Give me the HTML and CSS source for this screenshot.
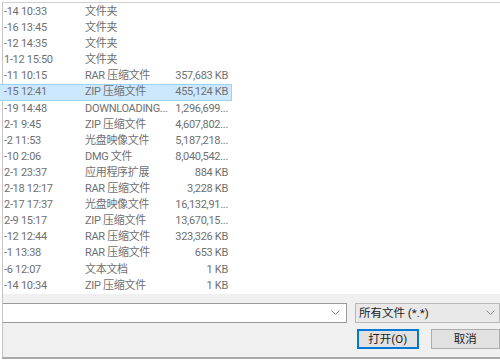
FILE: index.html
```html
<!DOCTYPE html>
<html lang="zh-CN">
  <head>
    <meta charset="UTF-8" />
    <meta name="viewport" content="width=device-width, initial-scale=1.0" />
    <title>打开文件</title>
    <link rel="stylesheet" href="styles.css">
  </head>
  <body>
    <div class="frame">
      <div class="list">
        <div class="row"><span class="date">-14 10:33</span><span class="type">文件夹</span><span class="size"></span></div>
        <div class="row"><span class="date">-16 13:45</span><span class="type">文件夹</span><span class="size"></span></div>
        <div class="row"><span class="date">-12 14:35</span><span class="type">文件夹</span><span class="size"></span></div>
        <div class="row"><span class="date">1-12 15:50</span><span class="type">文件夹</span><span class="size"></span></div>
        <div class="row"><span class="date">-11 10:15</span><span class="type">RAR 压缩文件</span><span class="size">357,683 KB</span></div>
        <div class="row selected"><span class="date">-15 12:41</span><span class="type">ZIP 压缩文件</span><span class="size">455,124 KB</span></div>
        <div class="row"><span class="date">-19 14:48</span><span class="type">DOWNLOADING...</span><span class="size">1,296,699...</span></div>
        <div class="row"><span class="date">2-1 9:45</span><span class="type">ZIP 压缩文件</span><span class="size">4,607,802...</span></div>
        <div class="row"><span class="date">-2 11:53</span><span class="type">光盘映像文件</span><span class="size">5,187,218...</span></div>
        <div class="row"><span class="date">-10 2:06</span><span class="type">DMG 文件</span><span class="size">8,040,542...</span></div>
        <div class="row"><span class="date">2-1 23:37</span><span class="type">应用程序扩展</span><span class="size">884 KB</span></div>
        <div class="row"><span class="date">2-18 12:17</span><span class="type">RAR 压缩文件</span><span class="size">3,228 KB</span></div>
        <div class="row"><span class="date">2-17 17:37</span><span class="type">光盘映像文件</span><span class="size">16,132,91...</span></div>
        <div class="row"><span class="date">2-9 15:17</span><span class="type">ZIP 压缩文件</span><span class="size">13,670,15...</span></div>
        <div class="row"><span class="date">-12 12:44</span><span class="type">RAR 压缩文件</span><span class="size">323,326 KB</span></div>
        <div class="row"><span class="date">-1 13:38</span><span class="type">RAR 压缩文件</span><span class="size">653 KB</span></div>
        <div class="row"><span class="date">-6 12:07</span><span class="type">文本文档</span><span class="size">1 KB</span></div>
        <div class="row"><span class="date">-14 10:34</span><span class="type">ZIP 压缩文件</span><span class="size">1 KB</span></div>
      </div>

      <div class="footer">
        <div class="footer-row">
          <div class="filename">
            <svg class="chevron" width="9" height="6" viewBox="0 0 9 6"><path d="M0.5 0.5 L4.5 4.5 L8.5 0.5" fill="none" stroke="#888" stroke-width="1"/></svg>
          </div>
          <div class="filter">
            <span>所有文件 (*.*)</span>
            <svg class="chevron" width="9" height="6" viewBox="0 0 9 6"><path d="M0.5 0.5 L4.5 4.5 L8.5 0.5" fill="none" stroke="#888" stroke-width="1"/></svg>
          </div>
        </div>
        <div class="footer-row buttons">
          <div class="btn primary">打开(O)</div>
          <div class="btn">取消</div>
        </div>
      </div>
    </div>
  </body>
</html>
```

FILE: styles.css
```css
body {
  margin: 0;
  width: 500px;
  height: 362px;
  overflow: hidden;
  background: #fff;
  font-family: Roboto, "Noto Sans CJK SC", sans-serif;
  font-size: 11px;
}
.frame {
  margin: 2px 0 0 2px;
  border-top: 1px solid #cfcfcf;
  border-left: 1px solid #c4c4c4;
  border-bottom: 2px solid #a8a8a8;
}
.list {
  height: 291px;
  padding-top: 1px;
  box-sizing: border-box;
  background: #fff;
}
.row {
  display: flex;
  height: 16.1px;
  line-height: 16px;
  width: 229px;
  color: #707070;
  letter-spacing: -0.3px;
  box-sizing: border-box;
  white-space: nowrap;
}
.row.selected {
  margin-left: -3px;
  padding-left: 3px;
  width: 232px;
  background: #cce8ff;
  border: 1px solid #99d1ff;
  border-left: none;
  line-height: 14px;
}
.date {
  width: 81px;
  padding-left: 1px;
}
.type {
  width: 82px;
}
.size {
  width: 61px;
  text-align: right;
}
.footer {
  height: 63px;
  background: #f0f0f0;
  padding-top: 9px;
  box-sizing: border-box;
  font-size: 11.5px;
}
.footer-row {
  display: flex;
  align-items: center;
}
.filename {
  width: 344px;
  height: 20px;
  background: #fff;
  border-top: 1px solid #9a9a9a;
  border-bottom: 1px solid #9a9a9a;
  border-right: 1px solid #9a9a9a;
  box-sizing: border-box;
  display: flex;
  align-items: center;
  justify-content: flex-end;
  padding-right: 6px;
}
.filter {
  margin-left: 8px;
  flex: 1;
  height: 20px;
  background: #e9e9e9;
  border: 1px solid #b8b8b8;
  box-sizing: border-box;
  display: flex;
  align-items: center;
  justify-content: space-between;
  padding: 0 4px 0 3px;
  color: #222;
  line-height: 16px;
}
.buttons {
  margin-top: 6px;
  padding-left: 354px;
  gap: 12px;
}
.btn {
  width: 70px;
  height: 20px;
  line-height: 18px;
  text-align: center;
  background: #e1e1e1;
  border: 1px solid #adadad;
  box-sizing: border-box;
  color: #222;
}
.btn.primary {
  width: 62px;
  border: 2px solid #0078d7;
  line-height: 16px;
}
```
